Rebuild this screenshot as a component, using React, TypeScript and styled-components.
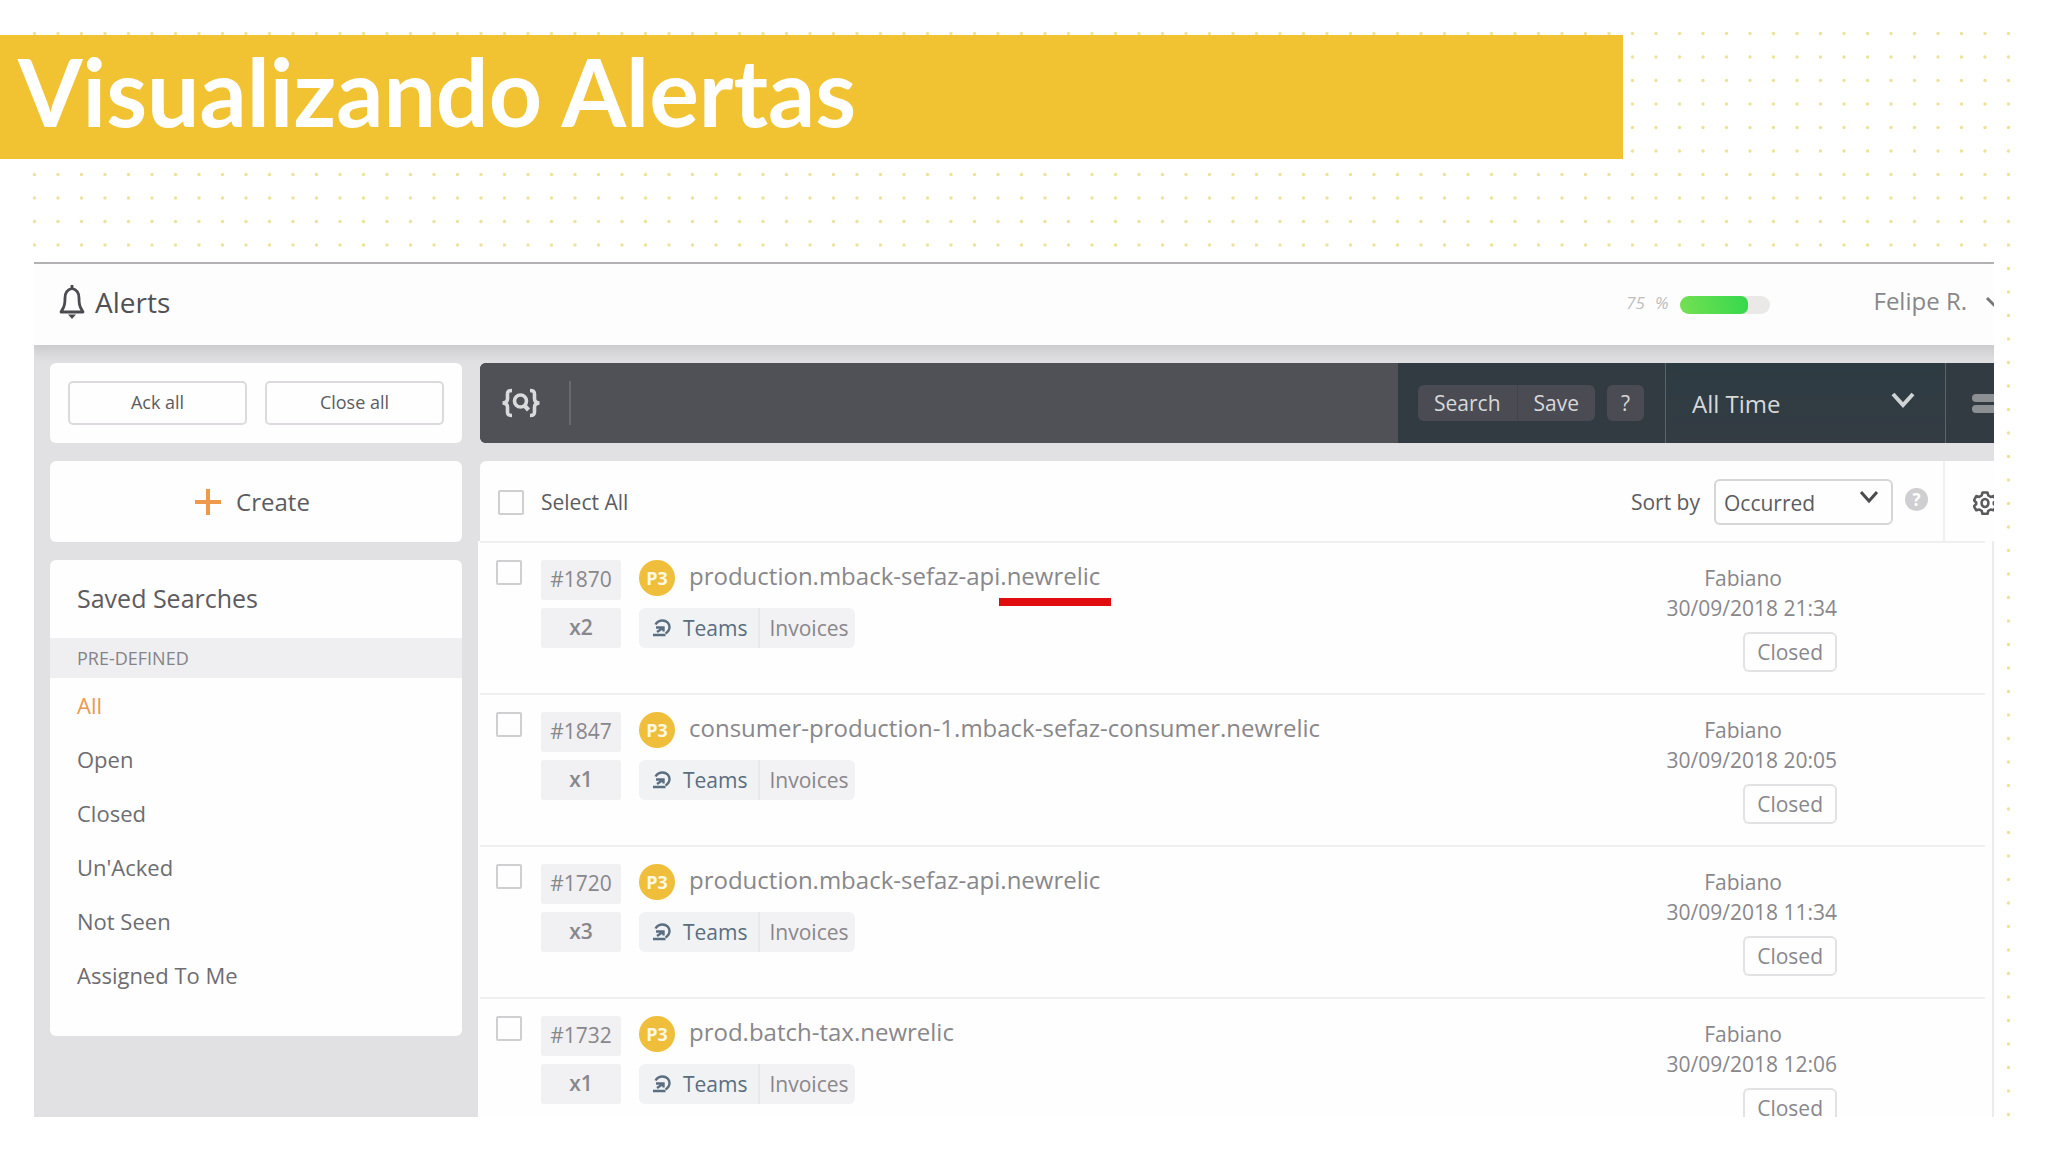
import React, { useState } from 'react';
import styled, { createGlobalStyle } from 'styled-components';

const Global = createGlobalStyle`
  *, *::before, *::after { box-sizing: border-box; }
  body {
    margin: 0;
    background: #ffffff;
    font-family: 'Open Sans', 'Noto Sans', sans-serif;
    font-size: 21px;
    line-height: 30px;
    color: #5c5c60;
  }
  button, input, select { font: inherit; color: inherit; }
`;

const Slide = styled.main`
  position: relative;
  display: flex;
  flex-direction: column;
  height: 100vh;
  padding: 35px 0;
  overflow: hidden;
`;

const DotField = styled.svg`
  position: absolute;
  top: 31px;
  left: 32px;
  width: calc(100% - 68px);
  height: calc(100% - 66px);
`;

const Banner = styled.h1`
  position: relative;
  flex: none;
  width: 79.25%;
  margin: 0;
  padding: 0 18px 12px;
  background: #f1c232;
  color: #ffffff;
  font: 700 93px/112px Lato, sans-serif;
`;

const Panel = styled.section`
  position: relative;
  flex: 1;
  min-height: 0;
  margin: 103px 54px 0 34px;
  overflow: hidden;
  background: #e1e1e3;
  box-shadow: -2px 0 #ffffff;
`;

const Page = styled.div`
  display: flex;
  flex-direction: column;
  width: calc(100% + 20px);
`;

const Header = styled.header`
  position: relative;
  display: flex;
  align-items: center;
  height: 83px;
  padding: 0 9px 0 25px;
  border-top: 2px solid #b4b1b4;
  background: #fefdfe;
  box-shadow: 0 2px 12px 5px #c9c8cb;
`;

const Brand = styled.h2`
  display: flex;
  align-items: center;
  gap: 10px;
  margin: 0 auto 0 0;
  padding-bottom: 6px;
  font-size: 28px;
  font-weight: 500;
  color: #515155;
`;

const Score = styled.div`
  display: flex;
  align-items: center;
  gap: 11px;
  margin-right: 104px;
  font-size: 17px;
  font-style: italic;
  color: #bdbcbf;
`;

const ScoreText = styled.span`
  display: flex;
  gap: 10px;
  padding-bottom: 3px;
`;

const Meter = styled.div`
  width: 90px;
  height: 18px;
  border-radius: 9px;
  background: #ebe9e8;
  overflow: hidden;
`;

const MeterFill = styled.div`
  width: 76%;
  height: 100%;
  border-radius: 7px;
  background: linear-gradient(75deg, #76e052, #35d84d);
`;

const UserButton = styled.button`
  display: flex;
  align-items: center;
  gap: 18px;
  padding: 0 0 8px;
  border: 0;
  background: none;
  font-size: 24px;
  color: #88878a;
`;

const UserArrow = styled.svg`
  margin-top: 4px;
`;

const Body = styled.div`
  display: flex;
  align-items: flex-start;
  padding: 18px 0 0 16px;
`;

const Sidebar = styled.aside`
  position: relative;
  flex: none;
  display: flex;
  flex-direction: column;
  gap: 18px;
  width: 412px;
`;

const Card = styled.div`
  border-radius: 6px;
  background: #fefefe;
`;

const BulkActions = styled(Card)`
  display: flex;
  gap: 18px;
  padding: 18px;
`;

const OutlineButton = styled.button`
  flex: 1;
  height: 44px;
  padding: 0 0 2px;
  border: 2px solid #dcdadd;
  border-radius: 5px;
  background: #fefefe;
  font-size: 18px;
`;

const CreateButton = styled.button`
  display: flex;
  align-items: center;
  justify-content: center;
  gap: 14px;
  height: 81px;
  padding: 0 8px 0 0;
  border: 0;
  border-radius: 6px;
  background: #fefefe;
  font-size: 24px;
`;

const Saved = styled(Card)`
  padding-bottom: 34px;
`;

const SavedTitle = styled.h3`
  margin: 0;
  padding: 23px 27px 25px;
  font-size: 25px;
  font-weight: 400;
`;

const SavedGroup = styled.h4`
  margin: 0;
  padding: 5px 27px;
  background: #efeef0;
  font-size: 18px;
  font-weight: 400;
  color: #848387;
`;

const SavedLink = styled.a<{ $active?: boolean }>`
  display: block;
  padding: 12px 27px;
  font-size: 22px;
  text-decoration: none;
  color: ${(p) => (p.$active ? '#ea9a4c' : '#6d6d71')};
`;

const Main = styled.div`
  position: relative;
  flex: 1;
  min-width: 0;
  padding-left: 16px;
`;

const Toolbar = styled.div`
  display: flex;
  height: 80px;
  margin: 0 0 18px 2px;
  border-radius: 6px 0 0 6px;
  overflow: hidden;
  background: #323b42;
  color: #d7d8da;
`;

const Query = styled.label`
  flex: 1;
  display: flex;
  align-items: center;
  gap: 28px;
  padding-left: 21px;
  background: #505156;
`;

const QueryInput = styled.input`
  flex: 1;
  min-width: 0;
  height: 44px;
  padding: 0 16px;
  border: 0;
  border-left: 2px solid #68696e;
  outline: 0;
  background: none;
`;

const QueryActions = styled.div`
  display: flex;
  align-items: center;
  padding: 0 21px 0 20px;
`;

const DarkButton = styled.button<{ $side?: 'left' | 'right' }>`
  min-width: 37px;
  height: 36px;
  padding: 0 ${(p) => (p.$side ? '16px' : 0)};
  border: 0;
  border-radius: ${(p) => (p.$side === 'left' ? '6px 0 0 6px' : p.$side === 'right' ? '0 6px 6px 0' : '6px')};
  border-right: ${(p) => (p.$side === 'left' ? '1px solid #42444b' : '0')};
  margin-left: ${(p) => (p.$side ? 0 : '12px')};
  background: #4b4c53;
  line-height: 32px;
`;

const RangePicker = styled.div`
  position: relative;
  width: 281px;
  border: solid #59646a;
  border-width: 0 1px;
  background: linear-gradient(#2d3c42, #343b43);
`;

const RangeSelect = styled.select`
  width: 100%;
  height: 100%;
  padding: 2px 27px 0 26px;
  border: 0;
  appearance: none;
  background: none;
  font-size: 24px;
`;

const PickerArrow = styled.svg<{ $right: number; $top: number }>`
  position: absolute;
  top: ${(p) => p.$top}px;
  right: ${(p) => p.$right}px;
  pointer-events: none;
`;

const MenuButton = styled.button`
  display: flex;
  flex-direction: column;
  justify-content: center;
  gap: 3px;
  width: 68px;
  padding: 0 0 0 26px;
  border: 0;
  background: none;
`;

const MenuBar = styled.span`
  width: 32px;
  height: 8px;
  border-radius: 4px;
  background: #8d9093;
`;

const ListHeader = styled.div`
  display: flex;
  align-items: center;
  height: 80px;
  margin-left: 2px;
  padding-left: 18px;
  border-radius: 6px 0 0 0;
  background: #fefefe;
`;

const SelectAll = styled.label`
  display: flex;
  align-items: center;
  gap: 17px;
  margin-right: auto;
  padding-top: 2px;
`;

const Check = styled.input`
  flex: none;
  width: 26px;
  height: 25px;
  margin: 0;
  appearance: none;
  border: 2px solid #cfced1;
  border-radius: 2px;
  background: #fefefe;
`;

const SortLabel = styled.label`
  margin-right: 14px;
  padding-top: 2px;
`;

const SortPicker = styled.div`
  position: relative;
  width: 179px;
  margin-right: 12px;
  padding-top: 2px;
`;

const SortSelect = styled.select`
  display: block;
  width: 100%;
  height: 46px;
  padding: 2px 8px 0;
  border: 2px solid #d6d5d8;
  border-radius: 6px;
  appearance: none;
  background: #fefefe;
`;

const HelpButton = styled.button`
  width: 23px;
  height: 23px;
  margin: 0 15px 4px 0;
  padding: 0;
  border: 0;
  border-radius: 50%;
  background: #cfcfd1;
  color: #fefefe;
  font-size: 17px;
  font-weight: 700;
  line-height: 23px;
`;

const GearButton = styled.button`
  display: flex;
  align-items: center;
  width: 71px;
  height: 80px;
  padding: 4px 0 0 28px;
  border: 0;
  border-left: 2px solid #f0eff1;
  background: none;
`;

const List = styled.ul`
  margin: 0 20px 0 0;
  padding: 0 7px 0 2px;
  border-right: 2px solid #ecebed;
  list-style: none;
  background: #fefefe;
`;

const Row = styled.li`
  display: flex;
  align-items: flex-start;
  height: 152px;
  padding: 17px 148px 0 16px;
  border-top: 2px solid #f0eff1;
  color: #88878b;
`;

const Badges = styled.div`
  flex: none;
  display: flex;
  flex-direction: column;
  gap: 8px;
  width: 80px;
  margin: 0 18px 0 19px;
`;

const Badge = styled.span<{ $bold?: boolean }>`
  height: 40px;
  border-radius: 3px;
  background: #f1f0f2;
  font-weight: ${(p) => (p.$bold ? 600 : 400)};
  line-height: 38px;
  text-align: center;
`;

const Summary = styled.div`
  flex: 1;
  display: flex;
  flex-direction: column;
  gap: 12px;
`;

const TitleLine = styled.div`
  display: flex;
  align-items: center;
  gap: 14px;
  height: 36px;
`;

const Priority = styled.span`
  width: 36px;
  height: 36px;
  border-radius: 50%;
  background: #efbe3b;
  color: #fdf8e6;
  font-size: 18px;
  font-weight: 700;
  line-height: 36px;
  text-align: center;
`;

const AlertLink = styled.a`
  padding-bottom: 4px;
  font-size: 24px;
  line-height: 32px;
  text-decoration: none;
  color: inherit;
`;

const Marked = styled.span`
  position: relative;
  &::after {
    content: '';
    position: absolute;
    left: -1px;
    right: -11px;
    bottom: -14px;
    height: 8px;
    background: #e00c10;
  }
`;

const Tags = styled.div`
  display: flex;
  line-height: 40px;
`;

const TeamTag = styled.span`
  display: flex;
  align-items: center;
  gap: 11px;
  height: 40px;
  padding: 0 11px 0 13px;
  border-right: 2px solid #e8e8ea;
  border-radius: 6px 0 0 6px;
  background: #f0f2f4;
  color: #5a6e80;
`;

const NameTag = styled.span`
  height: 40px;
  padding: 0 6px 0 9px;
  border-radius: 0 6px 6px 0;
  background: #f2f1f3;
`;

const Meta = styled.div`
  display: flex;
  flex-direction: column;
  align-items: flex-end;
`;

const Owner = styled.span`
  margin-right: 55px;
  padding-top: 3px;
`;

const Status = styled.button`
  height: 40px;
  margin-top: 9px;
  padding: 0 12px;
  border: 2px solid #e2e1e4;
  border-radius: 6px;
  background: #fefefe;
`;

const BellIcon = () => (
  <svg width="26" height="34" viewBox="0 0 26 34" fill="none" stroke="#4b4b4f" strokeWidth="2.8" strokeLinejoin="round">
    <path d="M13 3.500C8.500 4.500 6 8 6 13c0 5-.5 7.500-1.500 9.500L2 27h22l-2.500-4.500C20.500 20.500 20 18 20 13c0-5-2.500-8.500-7-9.500Z" />
    <path d="M13 0v4" />
    <path d="M9 29.500h8L13 34Z" fill="#4b4b4f" stroke="none" />
  </svg>
);

const PlusIcon = () => (
  <svg width="28" height="26" viewBox="0 0 28 26" stroke="#ee9a4a" strokeWidth="4">
    <path d="M1 13h26M14 0v26" />
  </svg>
);

const QueryIcon = () => (
  <svg width="40" height="30" viewBox="0 0 40 30" fill="none" stroke="#dadadc" strokeWidth="3.600">
    <path d="M11 2.500C7 2.500 6.500 3.500 6.500 6v4.500C6.500 13.500 5 15 1.500 15c3.500 0 5 1.500 5 4.500V24c0 2.500.5 3.500 4.500 3.500" />
    <path d="M29 2.500c4 0 4.500 1 4.500 3.500v4.500c0 3 1.500 4.500 5 4.500-3.500 0-5 1.500-5 4.500V24c0 2.500-.5 3.500-4.500 3.500" />
    <circle cx="19.500" cy="13" r="6" />
    <path d="m23 17 4.500 5" strokeWidth="4.200" />
  </svg>
);

const TeamIcon = () => (
  <svg width="20" height="18" viewBox="0 0 20 18" fill="none" stroke="#5a6e80" strokeWidth="2.400">
    <path d="M3.500 5.500C5 3 7.500 1.500 10.500 1.500c4 0 7 3 7 6.500 0 3-1.500 5-4 6.500" />
    <path d="M4 8.500h7.500v4M11.500 8.500 5 13M1 16h12.500" />
  </svg>
);

const GearIcon = () => (
  <svg width="24" height="24" viewBox="0 0 24 24" fill="none" stroke="#5a5a5e" strokeWidth="2.600" strokeLinejoin="round">
    <path d="M9.500 1.500h5l.8 3 2.400 1.400 3-.8 2.300 4.200L20.800 11.500v1.500L23 15.300l-2.300 4-3-.8-2.400 1.400-.8 3h-5l-.8-3-2.400-1.400-3 .8-2.300-4L3.200 13v-1.500L1 9.300l2.300-4.200 3 .8 2.400-1.400Z" />
    <ellipse cx="12" cy="12" rx="3.400" ry="4" />
  </svg>
);

const alerts = [
  { id: '#1870', count: 'x2', name: 'production.mback-sefaz-api', date: '30/09/2018 21:34', marked: true },
  { id: '#1847', count: 'x1', name: 'consumer-production-1.mback-sefaz-consumer', date: '30/09/2018 20:05' },
  { id: '#1720', count: 'x3', name: 'production.mback-sefaz-api', date: '30/09/2018 11:34' },
  { id: '#1732', count: 'x1', name: 'prod.batch-tax', date: '30/09/2018 12:06' },
];

const searches = ['All', 'Open', 'Closed', "Un'Acked", 'Not Seen', 'Assigned To Me'];

export default function App() {
  const [query, setQuery] = useState('');
  return (
    <Slide>
      <Global />
      <DotField aria-hidden="true">
        <defs>
          <pattern id="dots" width="47" height="47" patternUnits="userSpaceOnUse">
            <g fill="#ece39a">
              <circle cx="2.500" cy="2.500" r="1.700" />
              <circle cx="26" cy="2.500" r="1.700" />
              <circle cx="2.500" cy="26" r="1.700" />
              <circle cx="26" cy="26" r="1.700" />
            </g>
          </pattern>
        </defs>
        <rect width="100%" height="100%" fill="url(#dots)" />
      </DotField>
      <Banner>Visualizando Alertas</Banner>
      <Panel>
        <Page>
          <Header>
            <Brand>
              <BellIcon />
              Alerts
            </Brand>
            <Score>
              <ScoreText>
                <span>75</span>
                <span>%</span>
              </ScoreText>
              <Meter role="progressbar" aria-valuenow={75} aria-label="Profile">
                <MeterFill />
              </Meter>
            </Score>
            <UserButton>
              Felipe R.
              <UserArrow width="20" height="14" viewBox="0 0 20 14" fill="none" stroke="#77777a" strokeWidth="3">
                <path d="m2 2 8 8 8-8" />
              </UserArrow>
            </UserButton>
          </Header>
          <Body>
            <Sidebar>
              <BulkActions>
                <OutlineButton>Ack all</OutlineButton>
                <OutlineButton>Close all</OutlineButton>
              </BulkActions>
              <CreateButton>
                <PlusIcon />
                Create
              </CreateButton>
              <Saved>
                <SavedTitle>Saved Searches</SavedTitle>
                <SavedGroup>PRE-DEFINED</SavedGroup>
                <nav>
                  {searches.map((s, i) => (
                    <SavedLink key={s} href="#" $active={i === 0}>
                      {s}
                    </SavedLink>
                  ))}
                </nav>
              </Saved>
            </Sidebar>
            <Main>
              <Toolbar>
                <Query>
                  <QueryIcon />
                  <QueryInput aria-label="Query" value={query} onChange={(e) => setQuery(e.target.value)} />
                </Query>
                <QueryActions>
                  <DarkButton $side="left">Search</DarkButton>
                  <DarkButton $side="right">Save</DarkButton>
                  <DarkButton>?</DarkButton>
                </QueryActions>
                <RangePicker>
                  <RangeSelect aria-label="Time range">
                    <option>All Time</option>
                  </RangeSelect>
                  <PickerArrow $top={29} $right={30} width="24" height="16" viewBox="0 0 24 16" fill="none" stroke="#d0d3d5" strokeWidth="4">
                    <path d="m2 2 10 11L22 2" />
                  </PickerArrow>
                </RangePicker>
                <MenuButton aria-label="Menu">
                  <MenuBar />
                  <MenuBar />
                </MenuButton>
              </Toolbar>
              <ListHeader>
                <SelectAll>
                  <Check type="checkbox" />
                  Select All
                </SelectAll>
                <SortLabel htmlFor="sort">Sort by</SortLabel>
                <SortPicker>
                  <SortSelect id="sort">
                    <option>Occurred</option>
                  </SortSelect>
                  <PickerArrow $top={14} $right={15} width="18" height="13" viewBox="0 0 18 13" fill="none" stroke="#4c4c50" strokeWidth="3">
                    <path d="m1 1 8 9 8-9" />
                  </PickerArrow>
                </SortPicker>
                <HelpButton>?</HelpButton>
                <GearButton aria-label="Settings">
                  <GearIcon />
                </GearButton>
              </ListHeader>
              <List>
                {alerts.map((a) => (
                  <Row key={a.id}>
                    <Check type="checkbox" aria-label={a.id} />
                    <Badges>
                      <Badge>{a.id}</Badge>
                      <Badge $bold>{a.count}</Badge>
                    </Badges>
                    <Summary>
                      <TitleLine>
                        <Priority>P3</Priority>
                        <AlertLink href="#">
                          {a.name}
                          {a.marked ? <Marked>.newrelic</Marked> : '.newrelic'}
                        </AlertLink>
                      </TitleLine>
                      <Tags>
                        <TeamTag>
                          <TeamIcon />
                          Teams
                        </TeamTag>
                        <NameTag>Invoices</NameTag>
                      </Tags>
                    </Summary>
                    <Meta>
                      <Owner>Fabiano</Owner>
                      <span>{a.date}</span>
                      <Status>Closed</Status>
                    </Meta>
                  </Row>
                ))}
              </List>
            </Main>
          </Body>
        </Page>
      </Panel>
    </Slide>
  );
}
